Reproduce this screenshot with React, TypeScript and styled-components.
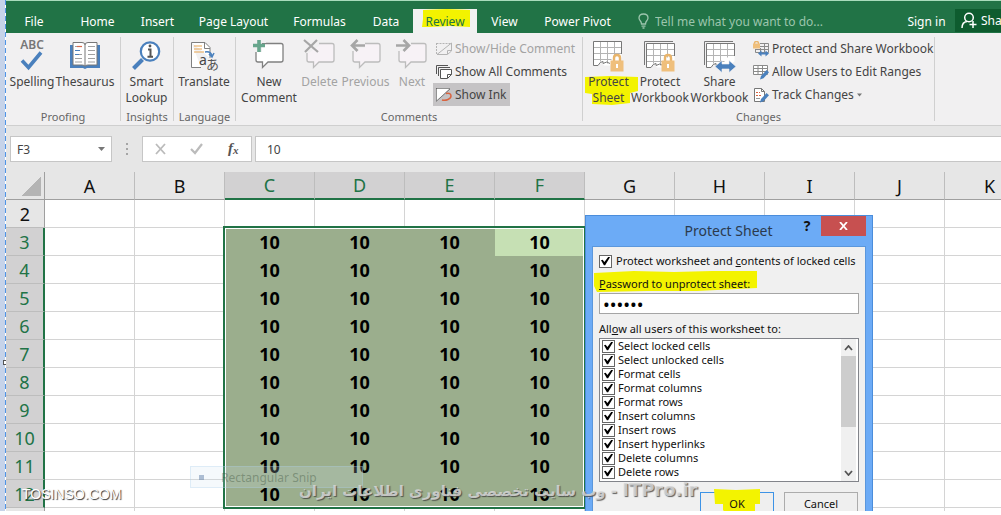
import React from "react";
import styled, { createGlobalStyle, css } from "styled-components";

const GREEN = "#217346";
const UI = '"Noto Sans", "Open Sans", sans-serif';

const Global = createGlobalStyle`
  *, *::before, *::after { box-sizing: border-box; }
  html, body, #root { height: 100%; }
  body { margin: 0; background: #fff; font-family: ${UI}; font-size: 12px; color: #444; overflow: hidden; }
  button, input { font: inherit; color: inherit; margin: 0; padding: 0; border: 0; background: none; border-radius: 0; }
  button { cursor: pointer; }
`;

/* ---------- frame ---------- */

const Screen = styled.div`
  height: 100%;
  padding-bottom: 4px;
`;

const Capture = styled.div`
  position: relative;
  display: flex;
  height: 100%;
  overflow: hidden;
`;

const SnipEdge = styled.div`
  position: relative;
  flex: none;
  width: 6px;
  background: linear-gradient(90deg, #c6d3e9 5px, #fff 5px);
  &::before {
    content: "";
    position: absolute;
    inset: 0 0 0 5px;
    background: repeating-linear-gradient(#4f94e6 0 5px, #fff 5px 8px);
  }
  &::after {
    content: "";
    position: absolute;
    left: 3px;
    top: 360px;
    width: 5px;
    height: 5px;
    background: #fff;
    border: 1px solid #555;
  }
`;

const Workbook = styled.main`
  flex: 1;
  min-width: 0;
  display: flex;
  flex-direction: column;
  background: #e6e6e6;
`;

/* ---------- tabs ---------- */

const TabBar = styled.nav`
  display: flex;
  flex: none;
  align-items: flex-end;
  height: 33px;
  background: ${GREEN};
  border-top: 1px solid #a9dcbc;
  color: #fff;
`;

const Tab = styled.button<{ $w: number; $active?: boolean }>`
  position: relative;
  flex: none;
  width: ${(p) => p.$w}px;
  height: 24px;
  white-space: nowrap;
  ${(p) => p.$active && css`background: #f1f1f1; color: ${GREEN};`}
`;

const FileTab = styled(Tab)`
  margin-right: 5px;
`;

const TellMe = styled.label`
  display: flex;
  flex: 1;
  align-items: center;
  gap: 6px;
  min-width: 0;
  height: 24px;
  padding-left: 15px;
  input { flex: 1; min-width: 0; outline: none; }
  input::placeholder { color: #9cc5ad; opacity: 1; }
`;

const Share = styled.button`
  display: flex;
  flex: none;
  align-items: center;
  gap: 3px;
  width: 46px;
  height: 23px;
  margin-bottom: 1px;
  padding-left: 6px;
  overflow: hidden;
  background: #0e5c2f;
  svg { flex: none; }
`;

const Ink = styled.svg`
  position: absolute;
  left: 0;
  top: 0;
  overflow: visible;
  pointer-events: none;
  fill: #f3f300;
`;

const Over = styled.span`
  position: relative;
`;

/* ---------- ribbon ---------- */

const Ribbon = styled.section`
  display: flex;
  flex: none;
  height: 93px;
  padding: 4px 0;
  background: #f1f0f1;
  border-bottom: 1px solid #cfcfcf;
`;

const Group = styled.div<{ $w: number }>`
  display: flex;
  flex-direction: column;
  flex: none;
  width: ${(p) => p.$w}px;
  border-right: 1px solid #d0d0d0;
`;

const GroupBody = styled.div<{ $pad?: number }>`
  display: flex;
  flex: 1;
  padding-left: ${(p) => p.$pad ?? 0}px;
`;

const GroupName = styled.div`
  height: 16px;
  line-height: 16px;
  margin-bottom: -4px;
  text-align: center;
  font-size: 11px;
  color: #666;
`;

const BigButton = styled.button<{ $w: number }>`
  position: relative;
  display: flex;
  flex-direction: column;
  align-items: center;
  flex: none;
  width: ${(p) => p.$w}px;
  line-height: 16px;
  white-space: nowrap;
  &:disabled { color: #a3a3a3; }
  svg.icon { position: relative; height: 34px; margin: 3px 0 0; flex: none; overflow: visible; }
`;

const SmallStack = styled.div`
  display: flex;
  flex-direction: column;
  align-items: flex-start;
`;

const SmallButton = styled.button<{ $on?: boolean; $flush?: boolean }>`
  display: flex;
  align-items: center;
  gap: 3px;
  height: 23px;
  padding: 0 4px 0 ${(p) => (p.$flush ? 0 : 3)}px;
  white-space: nowrap;
  background: ${(p) => (p.$on ? "#c5c3c5" : "none")};
  &:disabled { color: #a3a3a3; }
`;

/* ---------- formula bar ---------- */

const FormulaBar = styled.div`
  display: flex;
  flex: none;
  align-items: center;
  height: 46px;
  padding: 0 0 0 4px;
`;

const Box = styled.div`
  display: flex;
  align-items: center;
  height: 26px;
  background: #fff;
  border: 1px solid #c6c6c6;
`;

const NameBox = styled(Box)`
  width: 102px;
  padding: 0 6px;
  input { flex: 1; min-width: 0; outline: none; }
  button { display: flex; }
`;

const Grip = styled.svg`
  margin: 0 13px 0 14px;
`;

const Actions = styled(Box)`
  width: 110px;
  justify-content: space-between;
  padding: 0 10px 0 11px;
  margin-right: 3px;
  button { display: flex; }
`;

const Formula = styled(Box)`
  flex: 1;
  min-width: 0;
  border-right: 0;
  padding-left: 11px;
  input { width: 100%; outline: none; }
`;

/* ---------- grid ---------- */

const Sheet = styled.div`
  position: relative;
  flex: 1;
  min-height: 0;
  overflow: hidden;
  background: #fff;
`;

const Grid = styled.table`
  table-layout: fixed;
  width: 1029px;
  border-collapse: separate;
  border-spacing: 0;
  font-size: 18px;
  line-height: 24px;
  color: #000;
  th, td { height: 28px; padding: 0; text-align: center; overflow: hidden; }
`;

const ColHead = styled.th<{ $on?: boolean }>`
  font-weight: 400;
  background: ${(p) => (p.$on ? "#d2d1d2" : "#e6e6e6")};
  color: ${(p) => (p.$on ? GREEN : "#111")};
  border-right: 1px solid #bdbdbd;
  border-bottom: ${(p) => (p.$on ? `2px solid ${GREEN}` : "1px solid #9f9f9f")};
`;

const RowHead = styled.th<{ $on?: boolean }>`
  font-weight: 400;
  background: ${(p) => (p.$on ? "#d2d1d2" : "#e6e6e6")};
  color: ${(p) => (p.$on ? GREEN : "#111")};
  border-bottom: 1px solid #bdbdbd;
  border-right: ${(p) => (p.$on ? `2px solid ${GREEN}` : "1px solid #9f9f9f")};
`;

const Corner = styled.th`
  background: linear-gradient(135deg, transparent 50%, #b4b4b4 50%) 15px 5px / 20px 19px no-repeat #e6e6e6;
  border-right: 1px solid #9f9f9f;
  border-bottom: 1px solid #9f9f9f;
`;

const Cell = styled.td<{ $fill?: string }>`
  font-weight: 700;
  border-right: 1px solid ${(p) => p.$fill ?? "#d4d4d4"};
  border-bottom: 1px solid ${(p) => p.$fill ?? "#d4d4d4"};
  background: ${(p) => p.$fill ?? "#fff"};
`;

const Selection = styled.div`
  position: absolute;
  left: 217px;
  top: 54px;
  width: 363px;
  height: 283px;
  border: 2px solid ${GREEN};
  box-shadow: inset 0 0 0 1px #fff;
  pointer-events: none;
`;

/* ---------- dialog ---------- */

const Dialog = styled.form`
  position: absolute;
  left: 585px;
  top: 215px;
  width: 288px;
  padding: 0 6px 6px;
  background: #6cabf6;
  border: 1px solid #4b8ddb;
  font-size: 11px;
  line-height: 14px;
  color: #111;
`;

const TitleBar = styled.header`
  display: flex;
  align-items: flex-start;
  height: 30px;
  h2 {
    flex: 1;
    margin: 0;
    padding: 4px 0 0 72px;
    text-align: center;
    font-size: 14px;
    line-height: 22px;
    font-weight: 400;
    color: #2b3a4d;
  }
`;

const HelpButton = styled.button`
  width: 28px;
  height: 20px;
  font-size: 14px;
  font-weight: 700;
`;

const CloseButton = styled.button`
  display: flex;
  align-items: center;
  justify-content: center;
  width: 45px;
  height: 20px;
  background: #c75050;
`;

const Client = styled.div`
  padding: 6px;
  height: 290px;
  background: #f0f0f0;
  border: 1px solid #5b97dc;
`;

const Check = styled.label`
  display: flex;
  align-items: center;
  gap: 4px;
  white-space: nowrap;
  height: 14px;
  input {
    position: relative;
    flex: none;
    appearance: none;
    width: 13px;
    height: 13px;
    background: #fff;
    border: 1px solid #666;
  }
  input:checked::after {
    content: "";
    position: absolute;
    left: 1px;
    top: 1px;
    width: 9px;
    height: 9px;
    background: #000;
    clip-path: polygon(0 42%, 18% 36%, 38% 62%, 84% 0, 100% 8%, 46% 96%, 32% 96%);
  }
`;

const MainCheck = styled(Check)`
  height: 16px;
`;

const FieldLabel = styled.label`
  position: relative;
  display: block;
  width: max-content;
  margin-top: 8px;
`;

const Password = styled.input`
  display: block;
  width: 100%;
  height: 21px;
  margin: 2px 0 7px;
  padding: 0 3px;
  background: #fff;
  border: 1px solid #a5a5a5;
  font-size: 18px;
  color: #000;
  outline: none;
`;

const ListBox = styled.div`
  display: flex;
  height: 144px;
  margin-top: 2px;
  padding: 0 2px;
  background: #fff;
  border: 1px solid #82848a;
`;

const Options = styled.ul`
  flex: 1;
  margin: 0;
  padding: 0;
  list-style: none;
  label { gap: 3px; }
`;

const ScrollBar = styled.div`
  display: flex;
  flex-direction: column;
  justify-content: space-between;
  width: 15px;
  background: #f0f0f0;
  button { display: flex; height: 17px; align-items: center; justify-content: center; }
`;

const Thumb = styled.div`
  height: 71px;
  margin: 0 0 auto;
  background: #cdcdcd;
`;

const Buttons = styled.div`
  display: flex;
  justify-content: flex-end;
  gap: 10px;
  margin-top: 10px;
  padding-right: 1px;
`;

const DialogButton = styled.button<{ $primary?: boolean }>`
  position: relative;
  width: 74px;
  height: 23px;
  background: #efefef;
  border: 1px solid ${(p) => (p.$primary ? "#3d93e6" : "#acacac")};
`;

/* ---------- watermarks ---------- */

const Brand = styled.div`
  position: absolute;
  left: 22px;
  bottom: 8px;
  font: 14px/18px "Liberation Sans", sans-serif;
  color: #fff;
  text-shadow: 1px 1px 1px #333;
`;

const Slogan = styled.div`
  position: absolute;
  left: 299px;
  bottom: 6px;
  white-space: nowrap;
  font: 700 15px/28px "DejaVu Sans", sans-serif;
  color: rgba(215, 215, 215, 0.85);
  text-shadow: 1px 1px 1px rgba(60, 60, 60, 0.8);
  bdi { font-size: 18px; }
`;

const SnipGhost = styled.div`
  position: absolute;
  left: 190px;
  top: 466px;
  display: flex;
  width: 173px;
  height: 22px;
  align-items: center;
  padding-left: 8px;
  gap: 17px;
  background: rgba(205, 225, 240, 0.2);
  border: 1px solid rgba(170, 205, 235, 0.3);
  color: rgba(60, 80, 60, 0.4);
  i { width: 5px; height: 5px; background: rgba(100, 130, 170, 0.5); }
`;

/* ---------- icons ---------- */

const BLUE = "#4a80bd";

const SpellingIcon = () => (
  <svg className="icon" width="30" height="34" viewBox="0 0 30 34">
    <text x="15" y="9" textAnchor="middle" fontSize="12" fontWeight="600" fill="#777">ABC</text>
    <path d="M5 20.500l6.500 7L24 12.500" fill="none" stroke={BLUE} strokeWidth="3.600" />
  </svg>
);

const ThesaurusIcon = () => (
  <svg className="icon" width="32" height="34" viewBox="0 0 32 34">
    <path d="M1 5h3v20h24V5h3v23H18l-2 1-2-1H1z" fill={BLUE} />
    <path d="M4 2.500h9q3 0 3 2.500 0-2.500 3-2.500h9V25h-9q-3 0-3 1.500Q16 25 13 25H4z" fill="#fff" stroke="#777" />
    <path d="M16 5v21" stroke="#777" />
    <path d="M6 6.500h7M6 14.500h7M6 18.500h7M6 22h7M19 6.500h7M19 10.500h7M19 14.500h7M19 18.500h7M19 22h7" stroke="#a0a0a0" />
    <path d="M8 6.500h5" stroke="#d8694c" strokeWidth="1.200" />
    <path d="M6 10.500h5M6 14.500h4" stroke={BLUE} strokeWidth="1.200" />
  </svg>
);

const LookupIcon = () => (
  <svg className="icon" width="30" height="34" viewBox="0 0 30 34">
    <path d="M1.500 28.500l9-9" stroke={BLUE} strokeWidth="4" />
    <circle cx="18" cy="11.500" r="9.200" fill="#fff" stroke={BLUE} strokeWidth="2.200" />
    <path d="M16 9.500h2.500v7M15.500 16.800h5.500" fill="none" stroke="#555" strokeWidth="2" />
    <circle cx="18" cy="6" r="1.400" fill="#555" />
  </svg>
);

const TranslateIcon = () => (
  <svg className="icon" width="30" height="34" viewBox="0 0 30 34">
    <path d="M2.500 2.500H16l5 5V18M2.500 2.500v25H12" fill="#fff" stroke="#808080" />
    <path d="M15.500 2.500v6H21" fill="none" stroke="#808080" />
    <path d="M5 6h8M5 9h8M5 12h10" stroke="#e8a552" strokeWidth="1.200" />
    <path d="M16 12q6-1 7 4M20 14l3 3 2-4" fill="none" stroke={BLUE} strokeWidth="1.500" />
    <text x="10" y="25" fontSize="14" fill="#444">a</text>
    <text x="17" y="29" fontSize="13" fill="#555" fontFamily='"Noto Sans CJK JP", sans-serif'>あ</text>
  </svg>
);

const Bubble = ({ kind }: { kind: "new" | "delete" | "prev" | "next" }) => {
  const live = kind === "new";
  return (
    <svg className="icon" width="32" height="34" viewBox="0 0 32 34">
      <path
        d="M5 3.500H28q2 0 2 2V20q0 2-2 2H15l-5.500 5.500V22H5q-2 0-2-2V5.500q0-2 2-2z"
        fill={live ? "#fff" : "#f7f2f6"}
        stroke={live ? "#808080" : "#bcbcbc"}
        strokeWidth="1.300"
      />
      {kind === "new" && (
        <>
          <path d="M0 0h13v3H9v9H0z" fill="#f1f0f1" />
          <path d="M0 5.500h12M6 0v12" stroke="#67a58c" strokeWidth="3.600" />
        </>
      )}
      {kind === "delete" && (
        <>
          <path d="M0 0h15v6l-6 4-4 3H0z" fill="#f1f0f1" />
          <path d="M0 0l14 12M13 0L1 12" stroke="#a6a6a6" strokeWidth="2.200" />
        </>
      )}
      {kind === "prev" && (
        <>
          <path d="M0 0h15v8H9v3H0z" fill="#f1f0f1" />
          <path d="M2 5.500h13M7.500 0L2 5.500 7.500 11" fill="none" stroke="#a6a6a6" strokeWidth="2.600" />
        </>
      )}
      {kind === "next" && (
        <>
          <path d="M0 0h15v6l-6 5H0z" fill="#f1f0f1" />
          <path d="M0 5.500h13M7.500 0L13 5.500 7.500 11" fill="none" stroke="#a6a6a6" strokeWidth="2.600" />
        </>
      )}
    </svg>
  );
};

const Lock = () => (
  <>
    <path d="M21 21v-3q0-3 3-3t3 3v3" fill="none" stroke="#e9b56c" strokeWidth="2.400" />
    <path d="M17.500 20.500h13v11h-13z" fill="#efbf7c" />
    <path d="M24 24v4" stroke="#fff" strokeWidth="2" />
  </>
);

const SheetIcon = ({ book, share }: { book?: boolean; share?: boolean }) => (
  <svg className="icon" width="32" height="34" viewBox="0 0 32 34">
    {book && <path d="M.500 25V1.500H29" fill="none" stroke="#777" />}
    <g transform={book ? "translate(2 2)" : undefined}>
      <path d="M.500 1.500h28v18l-9 6H11L8 22l-3 3.500H.500z" fill="#fff" />
      <path d="M.500 7.500h28M.500 13.500h28M.500 19.500h18M7.500 1.500v20M14.500 1.500v22M21.500 1.500v14" stroke="#b4b4b4" />
      <path d="M28.500 14V1.500H.500v24H5q2-4 5-4v2q4-3 7 0" fill="none" stroke="#777" />
    </g>
    {share ? (
      <path d="M11 26.500l7-6v3.500h7v-3.500l7 6-7 6v-3.500h-7v3.500z" fill={BLUE} stroke="#f1f0f1" strokeWidth=".6" />
    ) : (
      <Lock />
    )}
  </svg>
);

const ShowHideIcon = () => (
  <svg width="16" height="16" viewBox="0 0 16 16" fill="none" stroke="#b4b4b4">
    <path d="M.500 2.500H15" strokeDasharray="2 1" />
    <path d="M.500 2v11.500" strokeDasharray="2 1" />
    <path d="M1 13.500L15.500 2v8l-4 3.500H1M11.500 13v-3.500h4" />
  </svg>
);

const ShowAllIcon = () => (
  <svg width="16" height="16" viewBox="0 0 16 16" fill="none" stroke="#555">
    <path d="M.500 10V1.500H12" />
    <path d="M2.500 12V3.500H14" />
    <path d="M4.500 5.500h11v5l-4 4h-7z" fill="#fff" />
    <path d="M11.500 14v-3.500h4" />
  </svg>
);

const InkIcon = () => (
  <svg width="16" height="16" viewBox="0 0 16 16" fill="none">
    <path d="M.500 1.500h13L.500 14z" fill="#fff" />
    <path d="M.500 1.500H14M.500 1.500V14" stroke="#444" strokeDasharray="1 1" />
    <path d="M0 14.500L14 2" stroke="#777" />
    <path d="M10 6.500q5-1 5 2.500c0 3-5 5-9 4" stroke="#d9633f" strokeWidth="1.500" />
  </svg>
);

const ProtectShareIcon = () => (
  <svg width="16" height="16" viewBox="0 0 16 16" fill="none">
    <path d="M7 2.500h8.500v9H2.500V8M7 5.500h8.500M3 8.500h12M7.500 7v4M11.500 2.500v9" stroke="#8a8a8a" />
    <path d="M1.500 3V2q0-1.500 2-1.500t2 1.500v1" stroke="#e9b56c" strokeWidth="1.400" />
    <path d="M0 2.500h7v5H0z" fill="#efbf7c" />
    <path d="M5 12.500L8.500 9.500v2h4v-2l3.500 3-3.500 3v-2h-4v2z" fill={BLUE} />
  </svg>
);

const Pencil = () => <path d="M7 15.500l1-3.500 5.500-6 2.500 2.300-5.500 6z" fill={BLUE} />;

const RangesIcon = () => (
  <svg width="16" height="16" viewBox="0 0 16 16" fill="none">
    <path d="M.500 1.500h14v9H.500zM.500 4.500h14M.500 7.500h14M5 1.500v9M9.500 1.500v9" fill="#fff" stroke="#8a8a8a" />
    <Pencil />
  </svg>
);

const TrackIcon = () => (
  <svg width="16" height="16" viewBox="0 0 16 16" fill="none">
    <path d="M1.500 1.500h7l3 3v10h-10z" fill="#fff" stroke="#777" />
    <path d="M8.500 1.500v3h3" stroke="#777" />
    <path d="M3 5.500h4M3 8.500h5" stroke="#d9633f" strokeDasharray="2 1" />
    <path d="M3 11.500h4" stroke="#999" />
    <Pencil />
  </svg>
);

const Caret = ({ size = 7 }: { size?: number }) => (
  <svg width={size} height="4" viewBox="0 0 7 4">
    <path d="M0 0h7L3.500 4z" fill="#777" />
  </svg>
);

/* ---------- data ---------- */

const columns = ["A", "B", "C", "D", "E", "F", "G", "H", "I", "J", "K"];
const rows = [2, 3, 4, 5, 6, 7, 8, 9, 10, 11, 12, 13];
const inSelection = (c: string, r: number) => c >= "C" && c <= "F" && r >= 3 && r <= 12;

const permissions = [
  "Select locked cells",
  "Select unlocked cells",
  "Format cells",
  "Format columns",
  "Format rows",
  "Insert columns",
  "Insert rows",
  "Insert hyperlinks",
  "Delete columns",
  "Delete rows",
];

export default function App() {
  return (
    <Screen>
      <Global />
      <Capture>
        <SnipEdge />
        <Workbook>
          <TabBar>
            <FileTab $w={56}>File</FileTab>
            <Tab $w={61}>Home</Tab>
            <Tab $w={59}>Insert</Tab>
            <Tab $w={93}>Page Layout</Tab>
            <Tab $w={79}>Formulas</Tab>
            <Tab $w={54}>Data</Tab>
            <Tab $w={64} $active>
              <Ink width="64" height="24">
                <path d="M10 1l24-1 23 1v17l-20-1-20 1-8 0 1-8z" />
              </Ink>
              <Over>Review</Over>
            </Tab>
            <Tab $w={55}>View</Tab>
            <Tab $w={91}>Power Pivot</Tab>
            <TellMe>
              <svg width="11" height="16" viewBox="0 0 11 16" fill="none" stroke="#9cc5ad" strokeWidth="1.300">
                <path d="M3.500 11q0-2-1.500-3.500Q1 6 1 5q0-4 4.500-4T10 5q0 1-1 2.500Q7.500 9 7.500 11zM3.500 13.200h4M4.500 15h2" />
              </svg>
              <input type="text" aria-label="Tell me" placeholder="Tell me what you want to do..." />
            </TellMe>
            <Tab $w={57}>Sign in</Tab>
            <Share>
              <svg width="17" height="17" viewBox="0 0 17 17" fill="none" stroke="#fff" strokeWidth="1.500">
                <circle cx="8" cy="5.500" r="4.300" />
                <path d="M1 16q0-6 5-6.500M12 9v7M8.500 12.500h7" />
              </svg>
              Share
            </Share>
          </TabBar>

          <Ribbon>
            <Group $w={115}>
              <GroupBody>
                <BigButton $w={52}><SpellingIcon />Spelling</BigButton>
                <BigButton $w={54}><ThesaurusIcon />Thesaurus</BigButton>
              </GroupBody>
              <GroupName>Proofing</GroupName>
            </Group>
            <Group $w={53}>
              <GroupBody>
                <BigButton $w={51}><LookupIcon />Smart<span>Lookup</span></BigButton>
              </GroupBody>
              <GroupName>Insights</GroupName>
            </Group>
            <Group $w={62}>
              <GroupBody>
                <BigButton $w={60}><TranslateIcon />Translate</BigButton>
              </GroupBody>
              <GroupName>Language</GroupName>
            </Group>
            <Group $w={347}>
              <GroupBody $pad={3}>
                <BigButton $w={60}><Bubble kind="new" />New<span>Comment</span></BigButton>
                <BigButton $w={41} disabled><Bubble kind="delete" />Delete</BigButton>
                <BigButton $w={51} disabled><Bubble kind="prev" />Previous</BigButton>
                <BigButton $w={42} disabled><Bubble kind="next" />Next</BigButton>
                <SmallStack>
                  <SmallButton disabled><ShowHideIcon />Show/Hide Comment</SmallButton>
                  <SmallButton><ShowAllIcon />Show All Comments</SmallButton>
                  <SmallButton $on><InkIcon />Show Ink</SmallButton>
                </SmallStack>
              </GroupBody>
              <GroupName>Comments</GroupName>
            </Group>
            <Group $w={352}>
              <GroupBody>
                <BigButton $w={51}>
                  <Ink width="51" height="70">
                    <path d="M2 40l25-1 28 1v14l-8 2v10l-18 2-20-1v-10l-7-1z" />
                  </Ink>
                  <SheetIcon />
                  <Over>Protect</Over>
                  <Over>Sheet</Over>
                </BigButton>
                <BigButton $w={52}><SheetIcon book />Protect<span>Workbook</span></BigButton>
                <BigButton $w={67}><SheetIcon book share />Share<span>Workbook</span></BigButton>
                <SmallStack>
                  <SmallButton $flush><ProtectShareIcon />Protect and Share Workbook</SmallButton>
                  <SmallButton $flush><RangesIcon />Allow Users to Edit Ranges</SmallButton>
                  <SmallButton $flush><TrackIcon />Track Changes<Caret size={5} /></SmallButton>
                </SmallStack>
              </GroupBody>
              <GroupName>Changes</GroupName>
            </Group>
          </Ribbon>

          <FormulaBar>
            <NameBox>
              <input type="text" aria-label="Name box" defaultValue="F3" />
              <button aria-label="Names"><Caret /></button>
            </NameBox>
            <Grip width="3" height="12" viewBox="0 0 3 12" fill="#a5a5a5">
              <path d="M0 0h2v2H0zM0 5h2v2H0zM0 10h2v2H0z" />
            </Grip>
            <Actions>
              <button aria-label="Cancel entry">
                <svg width="14" height="12" viewBox="0 0 14 12"><path d="M2 1l9 10M11 1L2 11" stroke="#bbb" strokeWidth="1.800" /></svg>
              </button>
              <button aria-label="Enter">
                <svg width="14" height="12" viewBox="0 0 14 12"><path d="M1 6l4 4 7-9" fill="none" stroke="#bbb" strokeWidth="2.200" /></svg>
              </button>
              <button aria-label="Insert function">
                <svg width="16" height="16" viewBox="0 0 16 16" fill="#555" fontFamily='"Liberation Serif", serif' fontStyle="italic" fontWeight="700">
                  <text x="3" y="12" fontSize="15">f</text>
                  <text x="8" y="13" fontSize="11">x</text>
                </svg>
              </button>
            </Actions>
            <Formula><input type="text" aria-label="Formula" defaultValue="10" /></Formula>
          </FormulaBar>

          <Sheet>
            <Grid>
              <colgroup>
                <col width="39" />
                {columns.map((c) => <col key={c} width="90" />)}
              </colgroup>
              <thead>
                <tr>
                  <Corner />
                  {columns.map((c) => <ColHead key={c} scope="col" $on={c >= "C" && c <= "F"}>{c}</ColHead>)}
                </tr>
              </thead>
              <tbody>
                {rows.map((r) => (
                  <tr key={r}>
                    <RowHead scope="row" $on={r >= 3 && r <= 12}>{r < 13 ? r : ""}</RowHead>
                    {columns.map((c) => (
                      <Cell key={c} $fill={inSelection(c, r) ? (c === "F" && r === 3 ? "#c6e0b4" : "#9bae8d") : undefined}>
                        {inSelection(c, r) ? 10 : ""}
                      </Cell>
                    ))}
                  </tr>
                ))}
              </tbody>
            </Grid>
            <Selection />
          </Sheet>
        </Workbook>

        <SnipGhost><i />Rectangular Snip</SnipGhost>

        <Dialog onSubmit={(e) => e.preventDefault()}>
          <TitleBar>
            <h2>Protect Sheet</h2>
            <HelpButton type="button" aria-label="Help">?</HelpButton>
            <CloseButton type="button" aria-label="Close">
              <svg width="9" height="8" viewBox="0 0 9 8"><path d="M1 0l7 8M8 0L1 8" stroke="#fff" strokeWidth="1.800" /></svg>
            </CloseButton>
          </TitleBar>
          <Client>
            <MainCheck>
              <input type="checkbox" defaultChecked />
              <span>Protect worksheet and <u>c</u>ontents of locked cells</span>
            </MainCheck>
            <FieldLabel htmlFor="pw">
              <Ink width="150" height="14">
                <path d="M-5-4l40-2 40 1 38-1 45 0v17l-60 3-50 0-50 1-3-6z" />
              </Ink>
              <Over><u>P</u>assword to unprotect sheet:</Over>
            </FieldLabel>
            <Password id="pw" type="password" defaultValue="secret" />
            <FieldLabel as="div" id="perm">All<u>o</u>w all users of this worksheet to:</FieldLabel>
            <ListBox role="group" aria-labelledby="perm">
              <Options>
                {permissions.map((p) => (
                  <li key={p}><Check><input type="checkbox" defaultChecked />{p}</Check></li>
                ))}
              </Options>
              <ScrollBar>
                <button type="button" aria-label="Scroll up">
                  <svg width="9" height="6" viewBox="0 0 9 6"><path d="M1 5l3.500-4L8 5" fill="none" stroke="#555" strokeWidth="1.800" /></svg>
                </button>
                <Thumb />
                <button type="button" aria-label="Scroll down">
                  <svg width="9" height="6" viewBox="0 0 9 6"><path d="M1 1l3.500 4L8 1" fill="none" stroke="#555" strokeWidth="1.800" /></svg>
                </button>
              </ScrollBar>
            </ListBox>
            <Buttons>
              <DialogButton $primary>
                <Ink width="74" height="23">
                  <path d="M13-4l22 1 24-1v15h-5v8l-10 3-18 0-4-5v-6h-8z" />
                </Ink>
                <Over>OK</Over>
              </DialogButton>
              <DialogButton type="button">Cancel</DialogButton>
            </Buttons>
          </Client>
        </Dialog>

        <Brand>TOSINSO.COM</Brand>
        <Slogan dir="rtl" lang="fa"><bdi>ITPro.ir</bdi> - وب سایت تخصصی فناوری اطلاعات ایران</Slogan>
      </Capture>
    </Screen>
  );
}
